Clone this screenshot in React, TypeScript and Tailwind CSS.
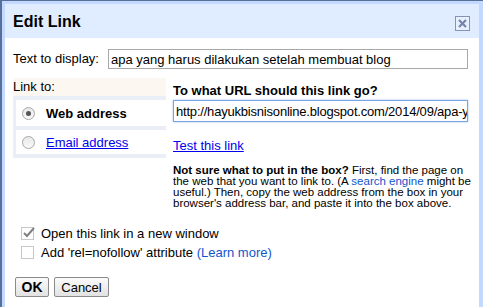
import React from "react";

function Radio({ checked }: { checked?: boolean }) {
  return (
    <div className="w-[13px] h-[13px] rounded-full border border-[#a8a8a8] bg-gradient-to-b from-[#e8e8e8] to-[#f8f8f8] flex items-center justify-center">
      {checked && <div className="w-[5px] h-[5px] rounded-full bg-[#555]" />}
    </div>
  );
}

function Checkbox({ checked }: { checked?: boolean }) {
  return (
    <div className="relative w-[13px] h-[13px] border border-[#c8c8c8] bg-white">
      {checked && (
        <svg className="absolute left-[0px] top-[-3px]" width="14" height="14" viewBox="0 0 14 14">
          <path d="M2 8 L5 11 L12 3" fill="none" stroke="#808080" strokeWidth="2" />
        </svg>
      )}
    </div>
  );
}

export default function App() {
  return (
    <div
      className="w-[483px] h-[307px] overflow-hidden bg-[#56709b] pl-[2px] pt-[1px]"
      style={{ fontFamily: '"Liberation Sans", Arial, sans-serif' }}
    >
      <div className="h-full bg-white border-l-[3px] border-t-[3px] border-r-[4px] border-[#c3d9ff] flex flex-col">
        <div className="h-[34px] bg-[#e0ecff] flex items-center justify-between pl-[8px] pr-[8px] shrink-0">
          <span className="text-[16px] font-bold text-black leading-none pt-[2px]">Edit Link</span>
          <div className="w-[15px] h-[15px] border border-[#8494b4] flex items-center justify-center bg-[#e8f0ff] mt-[4px] mr-[1px]">
            <svg width="11" height="11" viewBox="0 0 11 11">
              <path d="M2 2 L9 9 M9 2 L2 9" stroke="#7286ab" strokeWidth="2.2" />
            </svg>
          </div>
        </div>
        <div className="flex-1 pl-[8px] pr-[10px] text-[13px] text-black">
          <div className="flex items-center mt-[11px] h-[20px]">
            <span className="w-[95px] shrink-0">Text to display:</span>
            <div className="w-[360px] h-[20px] border border-[#a8a8a8] pl-[2px] flex items-center leading-none">
              apa yang harus dilakukan setelah membuat blog
            </div>
          </div>
          <div className="flex mt-[9px]">
            <div className="w-[153px] shrink-0">
              <div className="h-[18px] bg-[#fdf7f2] flex items-center">Link to:</div>
              <div className="bg-[#e9eef7] pl-[3px] pt-[4px] pb-[4px] flex flex-col gap-[4px]">
                <div className="h-[26px] bg-white flex items-center pl-[6px] gap-[11px] pt-[1px]">
                  <Radio checked />
                  <span className="font-bold">Web address</span>
                </div>
                <div className="h-[24px] bg-white flex items-center pl-[6px] gap-[11px] pt-[1px]">
                  <Radio />
                  <span className="text-[#0000ee] underline">Email address</span>
                </div>
              </div>
            </div>
            <div className="ml-[7px] flex-1">
              <div className="font-bold mt-[5px] leading-[15px]">To what URL should this link go?</div>
              <div className="w-[295px] h-[22px] mt-[2px] border border-[#78a3e6] shadow-[0_0_2px_#9fc0f0] pl-[2px] flex items-center overflow-hidden whitespace-nowrap leading-none text-[13px] tracking-[-0.2px]">
                http://hayukbisnisonline.blogspot.com/2014/09/apa-yang-harus
              </div>
              <div className="mt-[16px] text-[#0000ee] underline leading-[15px]">Test this link</div>
              <div className="mt-[12px] text-[11.5px] leading-[11px] whitespace-nowrap">
                <span className="font-bold">Not sure what to put in the box?</span> First, find the page on
                <br />
                the web that you want to link to. (A <span className="text-[#1155cc]">search engine</span> might be
                <br />
                useful.) Then, copy the web address from the box in your
                <br />
                browser's address bar, and paste it into the box above.
              </div>
            </div>
          </div>
          <div className="mt-[18px] pl-[8px] flex flex-col gap-[6px]">
            <div className="flex items-center gap-[7px] h-[13px]">
              <Checkbox checked />
              <span>Open this link in a new window</span>
            </div>
            <div className="flex items-center gap-[7px] h-[13px]">
              <Checkbox />
              <span>
                Add 'rel=nofollow' attribute <span className="text-[#1155cc]">(Learn more)</span>
              </span>
            </div>
          </div>
          <div className="mt-[18px] pl-[2px] flex gap-[5px]">
            <button className="w-[34px] h-[20px] border border-[#8a8a8a] rounded-[2px] bg-gradient-to-b from-[#fbfbfb] to-[#e2e2e2] font-bold text-[14px] leading-none">
              OK
            </button>
            <button className="w-[55px] h-[20px] border border-[#8a8a8a] rounded-[2px] bg-gradient-to-b from-[#fbfbfb] to-[#e2e2e2] text-[13px] leading-none">
              Cancel
            </button>
          </div>
        </div>
      </div>
    </div>
  );
}
